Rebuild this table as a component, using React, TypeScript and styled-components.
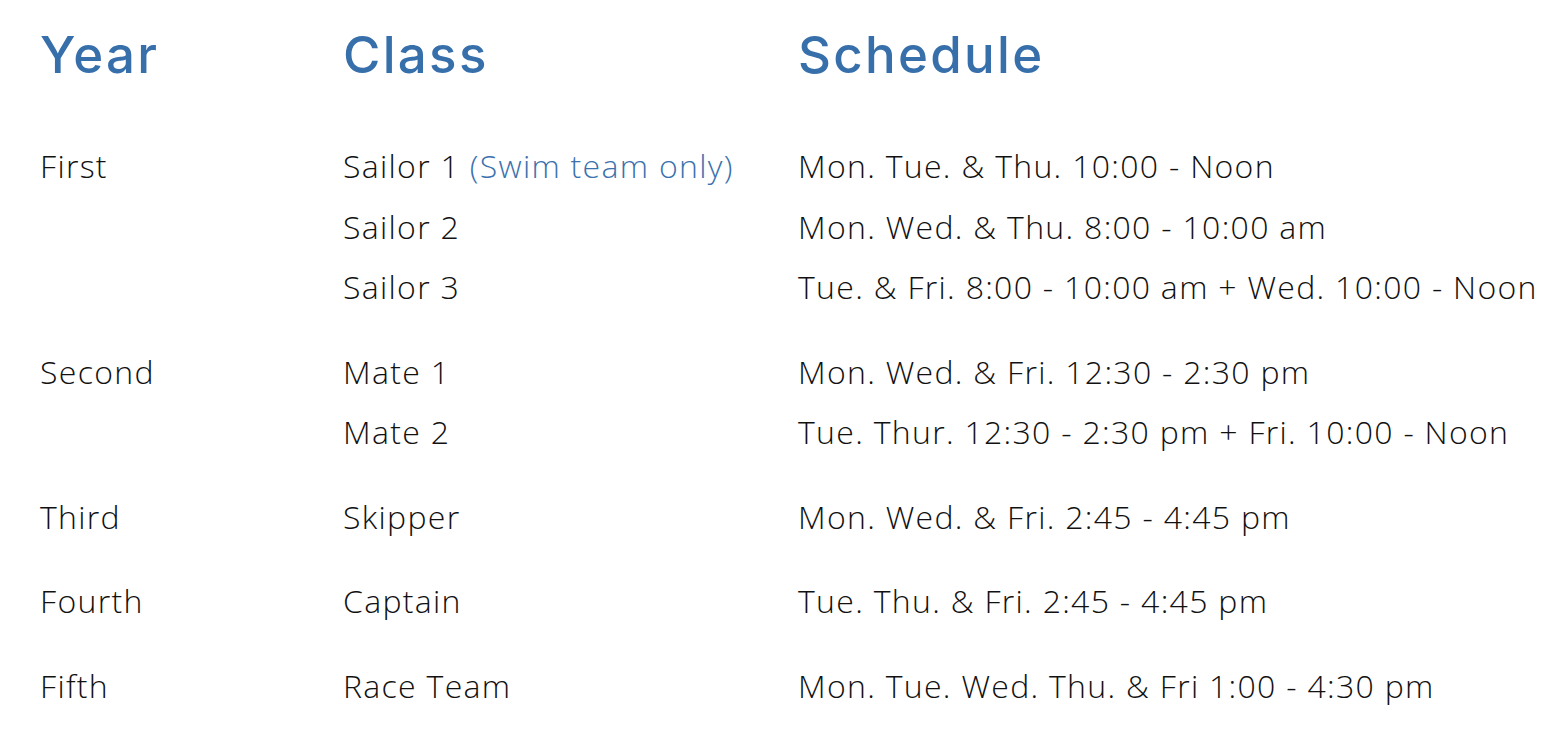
import React from "react";
import styled, { createGlobalStyle } from "styled-components";

const GlobalStyle = createGlobalStyle`
  html, body {
    margin: 0;
    padding: 0;
    background: #ffffff;
  }
  body {
    font-family: "Open Sans", Inter, sans-serif;
    color: #111111;
  }
`;

type Line = { cls: string; note?: string; schedule: string };
type Group = { year: string; lines: Line[] };

const groups: Group[] = [
  {
    year: "First",
    lines: [
      { cls: "Sailor 1", note: "(Swim team only)", schedule: "Mon. Tue. & Thu. 10:00 - Noon" },
      { cls: "Sailor 2", schedule: "Mon. Wed. & Thu. 8:00 - 10:00 am" },
      { cls: "Sailor 3", schedule: "Tue. & Fri. 8:00 - 10:00 am + Wed. 10:00 - Noon" },
    ],
  },
  {
    year: "Second",
    lines: [
      { cls: "Mate 1", schedule: "Mon. Wed. & Fri. 12:30 - 2:30 pm" },
      { cls: "Mate 2", schedule: "Tue. Thur. 12:30 - 2:30 pm + Fri. 10:00 - Noon" },
    ],
  },
  { year: "Third", lines: [{ cls: "Skipper", schedule: "Mon. Wed. & Fri. 2:45 - 4:45 pm" }] },
  { year: "Fourth", lines: [{ cls: "Captain", schedule: "Tue. Thu. & Fri. 2:45 - 4:45 pm" }] },
  { year: "Fifth", lines: [{ cls: "Race Team", schedule: "Mon. Tue. Wed. Thu. & Fri 1:00 - 4:30 pm" }] },
];

const Page = styled.div`
  padding: 20px 0 0 40px;
`;

const Row = styled.div<{ $gap?: number }>`
  display: grid;
  grid-template-columns: 303px 455px 1fr;
  margin-bottom: ${(p) => p.$gap ?? 0}px;
`;

const Head = styled.div`
  font-family: Inter, "Open Sans", sans-serif;
  font-size: 51px;
  font-weight: 500;
  line-height: 70px;
  color: #376fab;
  letter-spacing: 2.3px;
`;

const Cell = styled.div`
  font-size: 32px;
  font-weight: 300;
  line-height: 60.5px;
  white-space: nowrap;
  letter-spacing: 1.3px;
`;

const Note = styled.span`
  color: #3b72ae;
`;

const Stack = styled.div`
  display: contents;
`;

export default function App() {
  return (
    <>
      <GlobalStyle />
      <Page>
        <Row $gap={46}>
          <Head>Year</Head>
          <Head>Class</Head>
          <Head>Schedule</Head>
        </Row>
        {groups.map((g) => (
          <Row key={g.year} $gap={24}>
            <Cell style={{ gridRow: `1 / span ${g.lines.length}` }}>{g.year}</Cell>
            {g.lines.map((l) => (
              <Stack key={l.cls}>
                <Cell>
                  {l.cls}
                  {l.note && <Note> {l.note}</Note>}
                </Cell>
                <Cell>{l.schedule}</Cell>
              </Stack>
            ))}
          </Row>
        ))}
      </Page>
    </>
  );
}
